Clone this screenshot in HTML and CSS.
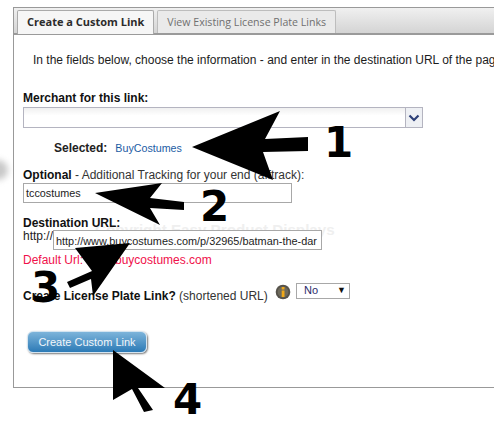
FILE: index.html
```html
<!DOCTYPE html>
<html lang="en">
<head>
<meta charset="utf-8">
<title>Create a Custom Link</title>
<link rel="stylesheet" href="styles.css">
</head>
<body>
<div class="smudge"></div>
<main class="panel">
  <nav class="tabs">
    <span class="tab tab-active">Create a Custom Link</span>
    <span class="tab">View Existing License Plate Links</span>
  </nav>
  <div class="watermark">Copyright Easy Product Displays</div>
  <form class="content">
    <p class="intro">In the fields below, choose the information - and enter in the destination URL of the pag</p>
    <label class="label merchant-label">Merchant for this link:</label>
    <div class="merchant-select">
      <span class="merchant-btn">
        <svg width="12" height="8" viewBox="0 0 12 8"><path d="M1.5 1.5 6 6l4.500-4.500" fill="none" stroke="#2c3f78" stroke-width="2.200"/></svg>
      </span>
    </div>
    <div class="selected-row"><b>Selected:</b><span class="selected-value">BuyCostumes</span></div>
    <div class="optional-label"><b>Optional</b> - Additional Tracking for your end (afftrack):</div>
    <div class="field tracking">tccostumes</div>
    <div class="label dest-label">Destination URL:</div>
    <div class="dest-row">
      <span class="prefix">http://</span>
      <div class="field url"><span class="url-text">http://www.buycostumes.com/p/32965/batman-the-dar</span></div>
    </div>
    <div class="default-url">Default Url: www.buycostumes.com</div>
    <div class="plate-row">
      <span class="plate-label"><b>Create License Plate Link?</b> (shortened URL)</span>
      <svg class="info" width="16" height="16" viewBox="0 0 16 16">
        <circle cx="8" cy="8" r="7.300" fill="#55524a"/>
        <circle cx="8" cy="8" r="5.400" fill="#6e6a5c"/>
        <rect x="6.700" y="6.500" width="2.800" height="6.500" fill="#f0a818"/>
        <rect x="6.700" y="3" width="2.800" height="2.500" fill="#f0a818"/>
      </svg>
      <span class="plate-select"><span>No</span><span class="caret">▼</span></span>
    </div>
    <button type="button" class="create-btn">Create Custom Link</button>
  </form>
</main>
<svg class="arrows" width="494" height="423" viewBox="0 0 494 423">
  <path d="M192 147 280 111 265 139 308 137V151L263 152 273 180Z"/>
  <path d="M95 193 162 183 150 198 184 202V210L150 208 160 225Z"/>
  <path d="M130 243 75 248 92 271 67 282 70 288 91 279 93 296Z"/>
  <path d="M113 350 165 388H138L153 410 144 412 132 389 113 400Z"/>
</svg>
<span class="num num1">1</span>
<span class="num num2">2</span>
<span class="num num3">3</span>
<span class="num num4">4</span>
</body>
</html>
```

FILE: styles.css
```css
html, body {
  margin: 0;
  padding: 0;
}
body {
  position: relative;
  width: 494px;
  height: 423px;
  overflow: hidden;
  background: #fff;
  color: #1c1c1c;
  font-family: "Liberation Sans", Arial, sans-serif;
  font-size: 12px;
}
.panel {
  position: relative;
  box-sizing: border-box;
  width: 481px;
  height: 381px;
  margin: 7px 0 0 13px;
  border: 1px solid #999;
  border-right: 0;
  overflow: hidden;
}
.tabs {
  box-sizing: border-box;
  display: flex;
  gap: 3px;
  height: 27px;
  padding: 2px 0 0 3px;
  background: linear-gradient(#f0f0f0, #d4d4d4);
  border-bottom: 2px solid #9a9a9a;
}
.tab {
  box-sizing: border-box;
  height: 23px;
  padding: 3px 9px 0;
  border: 1px solid #bdbdbd;
  border-bottom: 0;
  border-radius: 2px 2px 0 0;
  background: #eaeaea;
  color: #707070;
  font-family: "Open Sans", "Liberation Sans", sans-serif;
  font-size: 10.600px;
  line-height: 16px;
}
.tab-active {
  height: 24px;
  margin-bottom: -2px;
  background: #f6f6f6;
  color: #2c2c2c;
  font-size: 11px;
  font-weight: 700;
  border-color: #aaa;
}
.content {
  position: relative;
  z-index: 1;
  padding: 0 0 0 9px;
}
.intro {
  margin: 18px 0 0 10px;
  width: 600px;
  line-height: 14px;
  white-space: nowrap;
}
.label {
  color: #111;
  font-weight: 700;
  line-height: 14px;
}
.merchant-label {
  display: block;
  margin-top: 24px;
}
.merchant-select {
  box-sizing: border-box;
  display: flex;
  justify-content: flex-end;
  width: 400px;
  height: 21px;
  margin-top: 2px;
  border: 1px solid #b4b4c0;
  background: linear-gradient(#f0f0f0, #fff 40%);
}
.merchant-btn {
  display: flex;
  align-items: center;
  justify-content: center;
  width: 16px;
  border-left: 1px solid #b4b4c0;
  background: #eef0f4;
}
.selected-row {
  display: flex;
  gap: 8px;
  margin: 13px 0 0 31px;
  line-height: 14px;
  color: #222;
}
.selected-value {
  color: #1c5ca4;
  font-size: 10.700px;
}
.optional-label {
  margin-top: 13px;
  line-height: 14px;
  color: #333;
}
.optional-label b {
  color: #111;
}
.field {
  box-sizing: border-box;
  width: 269px;
  height: 20px;
  border: 1px solid #a8a8a8;
  background: #fff;
  padding-left: 2px;
  font-size: 10.800px;
  line-height: 18px;
  white-space: nowrap;
  overflow: hidden;
}
.tracking {
  margin-top: 1px;
}
.dest-label {
  margin-top: 13px;
}
.dest-row {
  display: flex;
  align-items: flex-start;
  margin-top: -1px;
}
.prefix {
  width: 30px;
  line-height: 14px;
}
.url {
  margin-top: 1px;
  padding: 1px 2px 0;
  font-size: 10.900px;
}
.url-text {
  display: block;
  overflow: hidden;
}
.default-url {
  margin-top: 3px;
  line-height: 14px;
  color: #f0104a;
}
.plate-row {
  display: flex;
  align-items: flex-start;
  height: 17px;
  margin-top: 16px;
}
.plate-label {
  width: 252px;
  padding-top: 6px;
  line-height: 14px;
  color: #333;
}
.plate-label b {
  color: #111;
}
.info {
  margin: 1px 0 0 0;
}
.plate-select {
  box-sizing: border-box;
  display: flex;
  justify-content: space-between;
  width: 54px;
  height: 16px;
  margin: 0 0 0 5px;
  padding: 0 3px 0 7px;
  border: 1px solid #a8a8a8;
  font-size: 11px;
  line-height: 13px;
  color: #2a2a6a;
}
.caret {
  color: #111;
  font-size: 9px;
}
.create-btn {
  display: block;
  box-sizing: border-box;
  width: 120px;
  height: 22px;
  margin: 31px 0 0 4px;
  padding: 0;
  border: 1px solid #d4e4f0;
  border-radius: 6px;
  background: linear-gradient(#7db4da, #2c7ab6);
  box-shadow: 1px 1px 2px #777;
  color: #f2f6fa;
  font-family: "Liberation Sans", Arial, sans-serif;
  font-size: 11px;
  font-weight: 400;
}
.watermark {
  position: absolute;
  left: 81px;
  top: 213px;
  color: #efefef;
  font-size: 15.200px;
  font-weight: 700;
  white-space: nowrap;
}
.smudge {
  position: absolute;
  left: -12px;
  top: 160px;
  width: 20px;
  height: 20px;
  border-radius: 50%;
  background: #c8c8c8;
  filter: blur(3px);
}
.arrows {
  position: absolute;
  left: 0;
  top: 0;
  z-index: 2;
}
.num {
  position: absolute;
  z-index: 3;
  color: #000;
  font-family: "DejaVu Sans", sans-serif;
  font-size: 42px;
  font-weight: 700;
  line-height: 42px;
}
.num1 { left: 324px; top: 122px; }
.num2 { left: 200px; top: 186px; }
.num3 { left: 31px; top: 267px; }
.num4 { left: 173px; top: 379px; }
```
